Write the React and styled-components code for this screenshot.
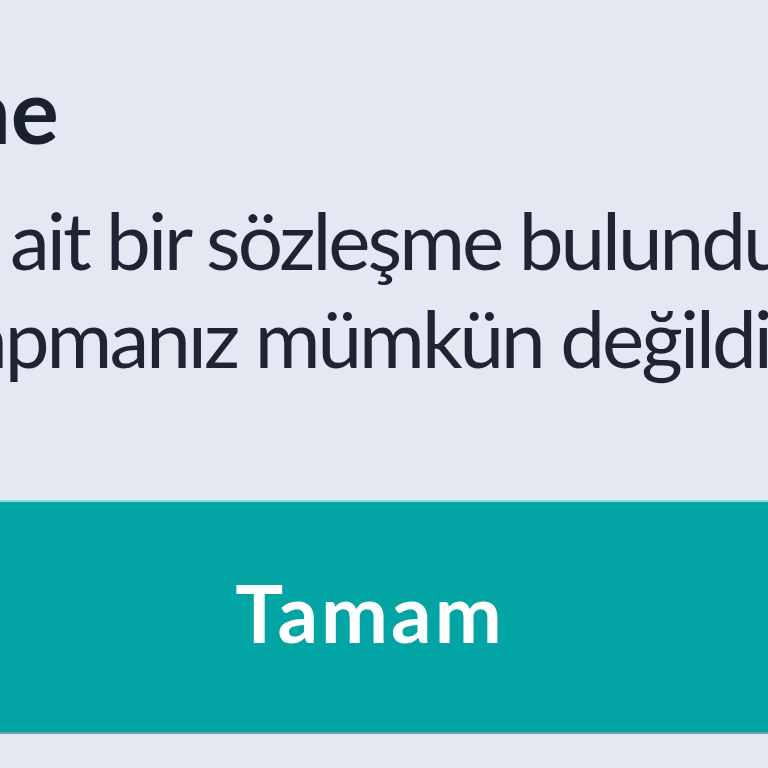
import React from "react"
import styled, { createGlobalStyle } from "styled-components"

const GlobalStyle = createGlobalStyle`
    html, body {
        margin: 0;
        padding: 0;
        background: #e4e8f3;
        overflow: hidden;
    }
`

const Sheet = styled.div`
    width: 768px;
    height: 768px;
    display: flex;
    flex-direction: column;
    background: #e4e8f3;
    overflow: hidden;
`

const Heading = styled.h2`
    margin: 0;
    padding-top: 64px;
    font-family: Lato, "Noto Sans", sans-serif;
    font-weight: 700;
    font-size: 90px;
    line-height: 90px;
    color: #1b2030;
    white-space: nowrap;
    text-indent: ${p => p.$indent}px;
`

const Message = styled.div`
    margin-top: 36px;
    display: flex;
    flex-direction: column;
`

const Line = styled.p`
    margin: 0;
    font-family: Lato, "Noto Sans", sans-serif;
    font-size: 80px;
    line-height: 98px;
    letter-spacing: -3px;
    color: #1f2435;
    white-space: nowrap;
    text-indent: ${p => p.$indent}px;
`

const ConfirmButton = styled.button`
    margin-top: 114px;
    margin-left: -28px;
    height: 234px;
    width: calc(100% + 28px);
    flex-shrink: 0;
    border: none;
    border-top: 2px solid #7fdde0;
    border-bottom: 2px solid #6f9fb0;
    background: #03a5a4;
    color: #ffffff;
    font-family: Lato, "Noto Sans", sans-serif;
    font-weight: 700;
    font-size: 80px;
    letter-spacing: 3px;
    padding: 0 0 10px;
    cursor: pointer;
`

const App = () => {
    return (
        <>
            <GlobalStyle />
            <Sheet>
                <Heading $indent={-40}>ne</Heading>
                <Message>
                    <Line $indent={10}>ait bir sözleşme bulunduğundan</Line>
                    <Line $indent={-32}>apmanız mümkün değildir.</Line>
                </Message>
                <ConfirmButton>Tamam</ConfirmButton>
            </Sheet>
        </>
    )
}

export default App
